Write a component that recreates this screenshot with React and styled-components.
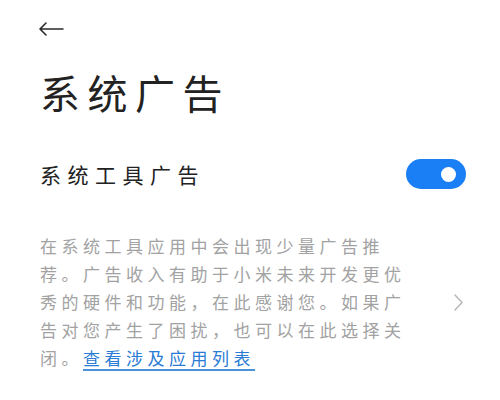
import React from 'react';
import styled, { createGlobalStyle } from 'styled-components';

const GlobalStyle = createGlobalStyle`
  html, body {
    margin: 0;
    padding: 0;
    background: #ffffff;
  }
  body {
    font-family: "Noto Sans CJK SC", "Noto Sans", sans-serif;
    -webkit-font-smoothing: antialiased;
  }
`;

const Page = styled.div`
  width: 500px;
  height: 400px;
  box-sizing: border-box;
  padding: 0 34px 0 40px;
  display: flex;
  flex-direction: column;
  overflow: hidden;
`;

const Header = styled.div`
  height: 60px;
  display: flex;
  align-items: flex-start;
  padding-top: 22px;
  box-sizing: border-box;
  margin-left: -2px;
`;

const BackButton = styled.button`
  border: 0;
  background: none;
  padding: 0;
  width: 26px;
  height: 14px;
  display: flex;
  align-items: center;
  cursor: pointer;
`;

const Title = styled.h1`
  margin: 8px 0 0;
  font-size: 40px;
  line-height: 48px;
  font-weight: 400;
  letter-spacing: 7.5px;
  color: #222222;
`;

const Row = styled.div`
  margin-top: 38px;
  height: 40px;
  display: flex;
  align-items: center;
  justify-content: space-between;
`;

const RowLabel = styled.span`
  font-size: 21px;
  letter-spacing: 6.5px;
  color: #222222;
`;

const Toggle = styled.div`
  width: 60px;
  height: 30px;
  border-radius: 15px;
  background: ${(p) => (p.$on ? '#1a7ff4' : '#d8d8d8')};
  display: flex;
  align-items: center;
  justify-content: ${(p) => (p.$on ? 'flex-end' : 'flex-start')};
  padding: 0 10px;
  box-sizing: border-box;
`;

const Knob = styled.div`
  width: 15px;
  height: 15px;
  border-radius: 50%;
  background: #ffffff;
`;

const Description = styled.div`
  margin-top: 38px;
  display: flex;
  align-items: center;
  justify-content: space-between;
`;

const DescText = styled.p`
  margin: 0;
  width: 375px;
  font-size: 17px;
  line-height: 28px;
  letter-spacing: 4.5px;
  color: #a2a2a2;
  line-break: strict;
`;

const Link = styled.a`
  color: #2a7bd4;
  text-decoration: underline;
  text-decoration-color: #4a92dc;
  text-underline-offset: 4px;
  text-decoration-thickness: 1.5px;
`;

const Chevron = styled.svg`
  flex: none;
  margin-right: 3px;
`;

export default function App() {
  return (
    <>
      <GlobalStyle />
      <Page>
        <Header>
          <BackButton aria-label="返回">
            <svg width="26" height="14" viewBox="0 0 26 14" fill="none">
              <path d="M25 7H2M8 1L2 7l6 6" stroke="#2a2a2a" strokeWidth="1.6" strokeLinecap="round" strokeLinejoin="round" />
            </svg>
          </BackButton>
        </Header>
        <Title>系统广告</Title>
        <Row>
          <RowLabel>系统工具广告</RowLabel>
          <Toggle $on>
            <Knob />
          </Toggle>
        </Row>
        <Description>
          <DescText>
            在系统工具应用中会出现少量广告推荐。广告收入有助于小米未来开发更优秀的硬件和功能，在此感谢您。如果广告对您产生了困扰，也可以在此选择关闭。<Link href="#">查看涉及应用列表</Link>
          </DescText>
          <Chevron width="9" height="17" viewBox="0 0 9 17" fill="none">
            <path d="M1 1l7 7.5L1 16" stroke="#b5b5b5" strokeWidth="1.4" strokeLinecap="round" strokeLinejoin="round" />
          </Chevron>
        </Description>
      </Page>
    </>
  );
}
